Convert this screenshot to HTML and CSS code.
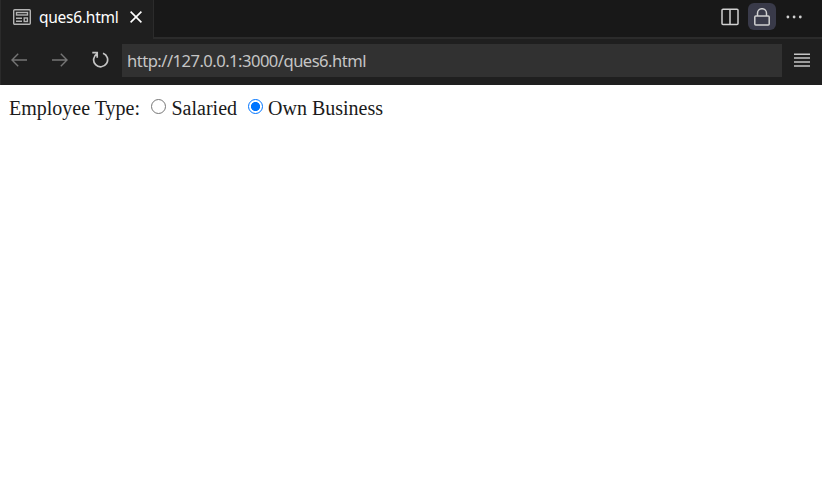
FILE: index.html
```
<!DOCTYPE html>
<html lang="en">
<head>
<meta charset="utf-8">
<title>ques6.html</title>
<link rel="stylesheet" href="styles.css">
</head>
<body>
<header class="tabs">
  <div class="tab">
    <svg class="preview-icon" width="18" height="16" viewBox="0 0 18 16" fill="none" stroke="#b4b4b4" stroke-width="1.4"><rect x=".7" y=".7" width="16.6" height="14.6" rx="1"/><rect x="3.5" y="3.5" width="11" height="2.5"/><path d="M3 9.2h6M3 12.2h6"/><rect x="11.2" y="9" width="3.2" height="3.5"/></svg>
    <span class="title">ques6.html</span>
    <svg class="close" width="12" height="12" viewBox="0 0 12 12" stroke="#fff" stroke-width="1.6"><path d="M.6.6l10.8 10.8M11.4.6L.6 11.4"/></svg>
  </div>
  <div class="actions">
    <svg class="split" width="18" height="18" viewBox="0 0 18 18" fill="none" stroke="#d0d0d0" stroke-width="1.5"><rect x="1" y="1.2" width="16" height="15.4" rx="1"/><path d="M9 1v16"/></svg>
    <div class="lock"><svg width="16" height="18" viewBox="0 0 16 18" fill="none" stroke="#d0d0d0" stroke-width="1.5"><rect x=".8" y="8" width="14.4" height="9" rx="1"/><path d="M3.5 8V5.2a4.5 4.5 0 0 1 9 0V8"/></svg></div>
    <svg class="more" width="16" height="4" viewBox="0 0 16 4" fill="#d0d0d0"><circle cx="1.9" cy="2" r="1.4"/><circle cx="8.1" cy="2" r="1.4"/><circle cx="14.3" cy="2" r="1.4"/></svg>
  </div>
</header>
<nav class="toolbar">
  <svg class="arrow" width="17" height="14" viewBox="0 0 17 14" fill="none" stroke="#757575" stroke-width="1.4"><path d="M7.2.7L1 7l6.2 6.3M1 7h15"/></svg>
  <svg class="arrow forward" width="17" height="14" viewBox="0 0 17 14" fill="none" stroke="#757575" stroke-width="1.4"><path d="M9.8.7L16 7l-6.2 6.3M16 7H1"/></svg>
  <svg class="reload" width="17" height="17" viewBox="0 0 17 17" fill="none" stroke="#c5c5c5" stroke-width="1.7"><path d="M5.2 1v5.8M.3 1.6h5.6M5 2.8A7 7 0 1 0 11 2.2"/></svg>
  <div class="address"><span>http://127.0.0.1:3000/ques6.html</span></div>
  <svg class="menu" width="16" height="14" viewBox="0 0 16 14" stroke="#c5c5c5" stroke-width="1.5"><path d="M0 1.2h16M0 5.1h16M0 9h16M0 12.9h16"/></svg>
</nav>
<main class="page">
  <span class="label">Employee Type:</span>
  <label class="option"><i class="radio"></i><span>Salaried</span></label>
  <label class="option own"><i class="radio checked"></i><span>Own Business</span></label>
</main>
</body>
</html>
```
FILE: styles.css
```
* { box-sizing: border-box; }
body { margin: 0; height: 482px; overflow: hidden; background: #fff; font-family: "Noto Sans", sans-serif; }
svg { display: block; flex: none; }
.tabs { display: flex; height: 39px; background: #181818; box-shadow: inset 0 -2px #2b2b2b; }
.tab { display: flex; align-items: center; width: 154px; height: 39px; padding: 0 0 5px 12px; background: #1f1f1f; border-left: 1px solid #2b2b2b; border-right: 1px solid #2b2b2b; }
.title { width: 80px; margin-left: 8px; color: #fff; font-size: 15.5px; letter-spacing: -.25px; line-height: 22px; white-space: nowrap; }
.close { margin-left: 11px; }
.actions { display: flex; align-items: center; height: 33px; margin-left: auto; padding-right: 20px; }
.lock { display: flex; align-items: center; justify-content: center; width: 28px; height: 27px; margin: 0 10px 0 9px; border-radius: 6px; background: #393a49; }
.toolbar { display: flex; align-items: center; height: 46px; padding: 0 12px 4px 10px; background: #1f1f1f; border-left: 1px solid #2b2b2b; }
.arrow { margin-bottom: 1px; }
.forward { margin-left: 23px; }
.reload { margin: 0 0 1px 24px; }
.address { display: flex; align-items: center; flex: 1; height: 33px; margin: 0 12px 0 13px; padding-left: 5px; background: #313131; color: #c5c5c5; font-size: 16.6px; letter-spacing: -.53px; white-space: nowrap; }
.page { display: flex; align-items: center; padding: 12px 9px; color: #1a1a1a; font-family: "Liberation Serif", serif; font-size: 20px; line-height: 23px; white-space: nowrap; }
.label { width: 142px; }
.option { display: flex; align-items: center; }
.own { margin-left: 11px; }
.radio { width: 15px; height: 15px; margin: 0 5px 4px 0; border: 1px solid #767676; border-radius: 50%; }
.option span { margin-left: .5px; }
.own { margin-left: 10.5px; }
.checked { border: 1.5px solid #0075ff; background: radial-gradient(circle, #0075ff 4.2px, #fff 4.9px); }
```
